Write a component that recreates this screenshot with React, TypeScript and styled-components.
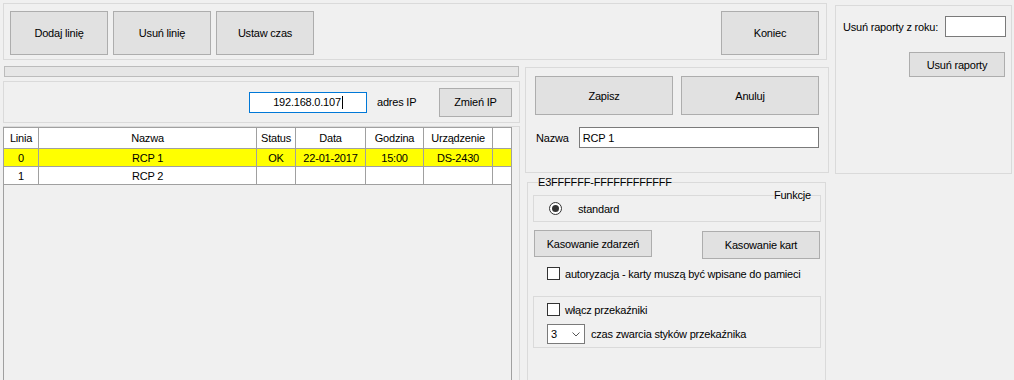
import React from 'react'
import styled, { createGlobalStyle } from 'styled-components'

const GlobalStyle = createGlobalStyle`
  html, body {
    margin: 0;
    padding: 0;
    background: #f0f0f0;
  }
  body {
    font-family: 'Liberation Sans', Arial, sans-serif;
    font-size: 11px;
    letter-spacing: -0.2px;
    color: #000;
  }
  * {
    box-sizing: border-box;
  }
`

const faint = '#dadada'
const gridLine = '#a0a0a0'

const Window = styled.div`
  display: flex;
  gap: 6px;
  width: 1014px;
  height: 380px;
  padding: 3px 2px 0 3px;
  overflow: hidden;
`

const MainArea = styled.div`
  display: flex;
  flex-direction: column;
  width: 826px;
  height: 100%;
`

const Panel = styled.div`
  border: 1px solid ${faint};
`

const TopPanel = styled(Panel)`
  display: flex;
  align-items: center;
  gap: 5px;
  width: 824px;
  height: 57px;
  padding: 2px 7px 0 6px;
`

const Button = styled.button<{ $w: number; $h: number }>`
  width: ${p => p.$w}px;
  height: ${p => p.$h}px;
  padding: 0;
  border: 1px solid #adadad;
  background: #e1e1e1;
  font: inherit;
  letter-spacing: inherit;
  color: #000;
  flex-shrink: 0;
`

const PushRight = styled(Button)`
  margin-left: auto;
`

const Body = styled.div`
  display: flex;
  flex: 1;
  min-height: 0;
`

const LeftColumn = styled.div`
  display: flex;
  flex-direction: column;
  width: 517px;
`

const Progress = styled.div`
  width: 515px;
  height: 11px;
  margin: 6px 0 0 1px;
  border: 1px solid #bcbcbc;
  background: #e6e6e6;
`

const IpPanel = styled(Panel)`
  display: flex;
  align-items: center;
  justify-content: flex-end;
  height: 42px;
  margin-top: 4px;
  padding: 0 7px 0 0;
`

const TextBox = styled.div<{ $w: number; $focused?: boolean; $center?: boolean }>`
  display: flex;
  align-items: center;
  justify-content: ${p => (p.$center ? 'center' : 'flex-start')};
  width: ${p => p.$w}px;
  height: 21px;
  padding: 0 3px;
  border: 1px solid ${p => (p.$focused ? '#0078d7' : '#7a7a7a')};
  background: #fff;
  white-space: nowrap;
`

const Caret = styled.span`
  display: inline-block;
  width: 1px;
  height: 13px;
  margin-left: 1px;
  background: #000;
`

const IpLabel = styled.span`
  width: 72px;
  padding-left: 10px;
`

const GridPanel = styled(Panel)`
  flex: 1;
  margin-top: 3px;
  border-bottom: none;
  border-left: none;
`

const Grid = styled.div`
  width: 509px;
  height: 100%;
  border: 1px solid ${gridLine};
  border-bottom: none;
  background: #f0f0f0;
`

const Row = styled.div<{ $header?: boolean; $selected?: boolean }>`
  display: grid;
  grid-template-columns: 35px 218px 39px 70px 58px 69px 18px;
  height: ${p => (p.$header ? 21 : 18)}px;
  border-bottom: 1px solid ${gridLine};
  background: ${p => (p.$selected ? '#ffff00' : '#fff')};
`

const Cell = styled.div`
  display: flex;
  align-items: center;
  justify-content: center;
  border-right: 1px solid ${gridLine};
  white-space: nowrap;

  &:last-child {
    border-right: none;
  }
`

const MiddleColumn = styled.div`
  display: flex;
  flex-direction: column;
  width: 304px;
  margin-left: 5px;
`

const EditPanel = styled(Panel)`
  height: 106px;
  margin-top: 7px;
  padding: 8px 9px 0 9px;
`

const ButtonRow = styled.div`
  display: flex;
  gap: 8px;
`

const NameRow = styled.div`
  display: flex;
  align-items: center;
  margin-top: 12px;
`

const NameLabel = styled.span`
  width: 44px;
  padding-left: 1px;
`

const GroupBox = styled.fieldset`
  flex: 1;
  min-width: 0;
  margin: 3px 0 0 2px;
  width: 299px;
  padding: 0 4px 0 5px;
  border: 1px solid ${faint};
  border-bottom: none;
`

const GroupTitle = styled.legend<{ $right?: boolean }>`
  padding: 0;
  margin-left: ${p => (p.$right ? 'auto' : '5px')};
  margin-right: ${p => (p.$right ? '9px' : '0')};
  line-height: 13px;
`

const InnerGroup = styled.fieldset`
  margin: 0;
  min-width: 0;
  padding: 0 0 6px 15px;
  border: 1px solid ${faint};
`

const RadioRow = styled.div`
  display: flex;
  align-items: center;
  gap: 16px;
`

const Radio = styled.span`
  display: flex;
  align-items: center;
  justify-content: center;
  width: 13px;
  height: 13px;
  border: 1px solid #333;
  border-radius: 50%;
  background: #fff;

  &::after {
    content: '';
    width: 7px;
    height: 7px;
    border-radius: 50%;
    background: #333;
  }
`

const ActionRow = styled.div`
  display: flex;
  align-items: flex-start;
  justify-content: space-between;
  margin-top: 8px;
  padding: 0 1px;
`

const LowerButton = styled(Button)`
  margin-top: 1px;
`

const CheckRow = styled.div<{ $top: number }>`
  display: flex;
  align-items: center;
  gap: 5px;
  margin-top: ${p => p.$top}px;
  padding-left: 14px;
`

const CheckBox = styled.span`
  width: 13px;
  height: 13px;
  border: 1px solid #333;
  background: #fff;
`

const RelayPanel = styled(Panel)`
  height: 52px;
  margin-top: 16px;
  padding-top: 6px;
`

const RelayCheck = styled(CheckRow)`
  padding-left: 13px;
`

const ComboRow = styled.div`
  display: flex;
  align-items: center;
  gap: 6px;
  margin-top: 8px;
  padding-left: 13px;
`

const Combo = styled.div`
  display: flex;
  align-items: center;
  justify-content: space-between;
  width: 38px;
  height: 20px;
  padding: 0 4px 0 3px;
  border: 1px solid #7a7a7a;
  background: #fff;
`

const RightPanel = styled(Panel)`
  width: 177px;
  height: 169px;
  margin-top: 2px;
  padding: 10px 5px 0 7px;
`

const ReportRow = styled.div`
  display: flex;
  align-items: center;
  justify-content: space-between;
`

const ReportButtonRow = styled.div`
  display: flex;
  justify-content: flex-end;
  margin-top: 15px;
  padding-right: 1px;
`

const columns = ['Linia', 'Nazwa', 'Status', 'Data', 'Godzina', 'Urządzenie', '']

const lines = [
  { id: '0', name: 'RCP 1', status: 'OK', date: '22-01-2017', time: '15:00', device: 'DS-2430' },
  { id: '1', name: 'RCP 2', status: '', date: '', time: '', device: '' },
]

const ChevronDown = () => (
  <svg width="8" height="5" viewBox="0 0 8 5">
    <path d="M0.5 0.5 L4 4 L7.5 0.5" fill="none" stroke="#555" strokeWidth="1" />
  </svg>
)

export default function App() {
  return (
    <>
      <GlobalStyle />
      <Window>
        <MainArea>
          <TopPanel>
            <Button $w={98} $h={44}>Dodaj linię</Button>
            <Button $w={98} $h={44}>Usuń linię</Button>
            <Button $w={98} $h={44}>Ustaw czas</Button>
            <PushRight $w={98} $h={44}>Koniec</PushRight>
          </TopPanel>

          <Body>
            <LeftColumn>
              <Progress />
              <IpPanel>
                <TextBox $w={118} $focused $center>
                  192.168.0.107
                  <Caret />
                </TextBox>
                <IpLabel>adres IP</IpLabel>
                <Button $w={73} $h={29}>Zmień IP</Button>
              </IpPanel>
              <GridPanel>
                <Grid>
                  <Row $header>
                    {columns.map((c, i) => (
                      <Cell key={i}>{c}</Cell>
                    ))}
                  </Row>
                  {lines.map((l, i) => (
                    <Row key={l.id} $selected={i === 0}>
                      <Cell>{l.id}</Cell>
                      <Cell>{l.name}</Cell>
                      <Cell>{l.status}</Cell>
                      <Cell>{l.date}</Cell>
                      <Cell>{l.time}</Cell>
                      <Cell>{l.device}</Cell>
                      <Cell />
                    </Row>
                  ))}
                </Grid>
              </GridPanel>
            </LeftColumn>

            <MiddleColumn>
              <EditPanel>
                <ButtonRow>
                  <Button $w={138} $h={39}>Zapisz</Button>
                  <Button $w={138} $h={39}>Anuluj</Button>
                </ButtonRow>
                <NameRow>
                  <NameLabel>Nazwa</NameLabel>
                  <TextBox $w={241}>RCP 1</TextBox>
                </NameRow>
              </EditPanel>

              <GroupBox>
                <GroupTitle>E3FFFFFF-FFFFFFFFFFFF</GroupTitle>
                <InnerGroup>
                  <GroupTitle $right>Funkcje</GroupTitle>
                  <RadioRow>
                    <Radio />
                    standard
                  </RadioRow>
                </InnerGroup>
                <ActionRow>
                  <Button $w={118} $h={27}>Kasowanie zdarzeń</Button>
                  <LowerButton $w={118} $h={28}>Kasowanie kart</LowerButton>
                </ActionRow>
                <CheckRow $top={8}>
                  <CheckBox />
                  autoryzacja - karty muszą być wpisane do pamieci
                </CheckRow>
                <RelayPanel>
                  <RelayCheck $top={0}>
                    <CheckBox />
                    włącz przekaźniki
                  </RelayCheck>
                  <ComboRow>
                    <Combo>
                      3
                      <ChevronDown />
                    </Combo>
                    czas zwarcia styków przekaźnika
                  </ComboRow>
                </RelayPanel>
              </GroupBox>
            </MiddleColumn>
          </Body>
        </MainArea>

        <RightPanel>
          <ReportRow>
            <span>Usuń raporty z roku:</span>
            <TextBox $w={61} />
          </ReportRow>
          <ReportButtonRow>
            <Button $w={96} $h={25}>Usuń raporty</Button>
          </ReportButtonRow>
        </RightPanel>
      </Window>
    </>
  )
}
